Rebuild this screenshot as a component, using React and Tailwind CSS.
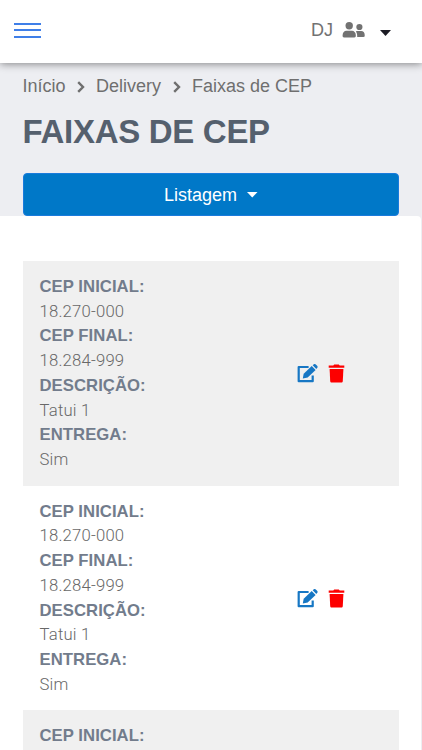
const ranges = [
  {
    id: 1,
    fields: [
      ["CEP INICIAL:", "18.270-000"],
      ["CEP FINAL:", "18.284-999"],
      ["DESCRIÇÃO:", "Tatui 1"],
      ["ENTREGA:", "Sim"],
    ],
  },
  {
    id: 2,
    fields: [
      ["CEP INICIAL:", "18.270-000"],
      ["CEP FINAL:", "18.284-999"],
      ["DESCRIÇÃO:", "Tatui 1"],
      ["ENTREGA:", "Sim"],
    ],
  },
];

function Caret({ className }) {
  return (
    <svg viewBox="0 0 10 5" preserveAspectRatio="none" className={className} fill="currentColor">
      <path d="M0 0h10L5 5z" />
    </svg>
  );
}

function Chevron() {
  return (
    <svg viewBox="0 0 8 12" className="mx-[11px] mt-[2px] h-[12px] w-[8px]" fill="none" stroke="currentColor" strokeWidth="2.4">
      <path d="M1.2 1.2 6 6l-4.8 4.8" />
    </svg>
  );
}

function UsersIcon() {
  return (
    <svg viewBox="0 0 23 16" className="ml-[9px] h-[16px] w-[23px]" fill="currentColor">
      <circle cx="7.2" cy="3.8" r="3.7" />
      <circle cx="17.4" cy="5" r="3.1" />
      <path d="M.6 13.2C.6 10.2 2.4 8.700 4.300 8.700H10c2 0 3.800 1.500 3.800 4.500v.9c0 .9-.5 1.400-1.400 1.400H2c-.9 0-1.400-.5-1.400-1.400z" />
      <path d="M13.900 9.500c.5-.3 1-.4 1.600-.4h3.700c2.100 0 3.500 1.500 3.500 3.900v.7c0 .8-.4 1.200-1.200 1.200h-6.300c.1-2.100-.2-4-1.300-5.400z" />
    </svg>
  );
}

function EditIcon() {
  return (
    <svg viewBox="0 0 21 19" className="h-[19px] w-[21px]">
      <path d="M11.600 3H1.700v14.200h14v-5.700" fill="none" stroke="currentColor" strokeWidth="2.200" strokeLinejoin="round" />
      <path d="M14.700 2l3.900 3.900-7.900 7.700-4.900 1 .9-4.800z" fill="currentColor" />
      <path d="M15.700 1.200l.8-.7c.8-.7 1.600-.7 2.300 0l1.300 1.300c.7.7.7 1.600 0 2.300l-.8.800z" fill="currentColor" />
    </svg>
  );
}

function TrashIcon() {
  return (
    <svg viewBox="0 0 17 19" className="h-[19px] w-[17px]" fill="currentColor">
      <path d="M.7 1.600h4.600L6.200.5h4.600l.9 1.100h4.600v2.200H.7z" />
      <path d="M1.600 4.900h13.800l-.6 12.100c-.1 1-.6 1.500-1.500 1.500H3.700c-.9 0-1.400-.5-1.500-1.500z" />
    </svg>
  );
}

function Header() {
  return (
    <header className="relative z-10 flex h-[63px] shrink-0 items-center justify-between bg-white pl-[14px] pr-[31px] shadow-[0_1px_8px_rgba(0,0,0,0.45)]">
      <button className="mb-[3px] flex w-[27px] flex-col gap-[4.5px]">
        <span className="h-[2px] w-full bg-[#3f7fe8]" />
        <span className="h-[2px] w-full bg-[#3f7fe8]" />
        <span className="h-[2px] w-full bg-[#3f7fe8]" />
      </button>
      <div className="mb-[3px] flex items-center text-[#727272]">
        <span className="text-[18px] leading-6">DJ</span>
        <UsersIcon />
        <Caret className="ml-[15px] mt-[6px] h-[6px] w-[11px] text-[#1c1c24]" />
      </div>
    </header>
  );
}

function Breadcrumb() {
  return (
    <nav className="flex h-6 items-center text-[18px] leading-6 text-[#6f6f6f]">
      <span className="w-[43.500px] whitespace-nowrap">Início</span>
      <Chevron />
      <span className="w-[66px] whitespace-nowrap">Delivery</span>
      <Chevron />
      <span className="whitespace-nowrap">Faixas de CEP</span>
    </nav>
  );
}

function Field({ label, value }) {
  return (
    <>
      <dt className="text-[16.7px] font-bold tracking-[0.05px] text-[#727c8c]">{label}</dt>
      <dd className="font-['Roboto','Liberation_Sans',sans-serif] text-[16.7px] font-light tracking-[0.2px] text-[#686868]">{value}</dd>
    </>
  );
}

function RangeRow({ range }) {
  return (
    <li className="flex h-[224.7px] shrink-0 items-center justify-between pl-[17px] pr-[54px] odd:bg-[#f0f0f0]">
      <dl className="mt-[1px] leading-[24.75px]">
        {range.fields.map(([label, value]) => (
          <Field key={label} label={label} value={value} />
        ))}
      </dl>
      <div className="flex items-center gap-[10px]">
        <button className="text-[#1777c4]">
          <EditIcon />
        </button>
        <button className="text-[#fd0000]">
          <TrashIcon />
        </button>
      </div>
    </li>
  );
}

export default function App() {
  return (
    <div className="flex h-[750px] w-[422px] flex-col overflow-hidden bg-[#edeef2] font-['Liberation_Sans',Arial,sans-serif]">
      <Header />
      <section className="flex h-[153px] shrink-0 flex-col pl-[22.5px] pr-[23px] pt-[11px]">
        <Breadcrumb />
        <h1 className="mt-[13.5px] text-[33px] font-bold leading-10 tracking-[-0.3px] text-[#55606e]">FAIXAS DE CEP</h1>
        <button className="mt-[21.5px] flex h-[43px] shrink-0 items-center justify-center rounded-[4px] border border-[#1a7bdc] bg-[#0078c8] pt-px text-[18px] text-white">
          Listagem
          <Caret className="ml-[10px] h-[5.5px] w-[10.5px]" />
        </button>
      </section>
      <main className="mr-px flex-1 overflow-hidden rounded-tr-[4px] bg-white pl-[22.5px] pr-[22px] pt-[45px]">
        <ul className="flex flex-col">
          {ranges.map((range) => (
            <RangeRow key={range.id} range={range} />
          ))}
          <li className="h-[40px] bg-[#f0f0f0] pl-[17px] pt-[14px] text-[16.7px] font-bold leading-[24.75px] tracking-[0.05px] text-[#727c8c]">
            CEP INICIAL:
          </li>
        </ul>
      </main>
    </div>
  );
}
